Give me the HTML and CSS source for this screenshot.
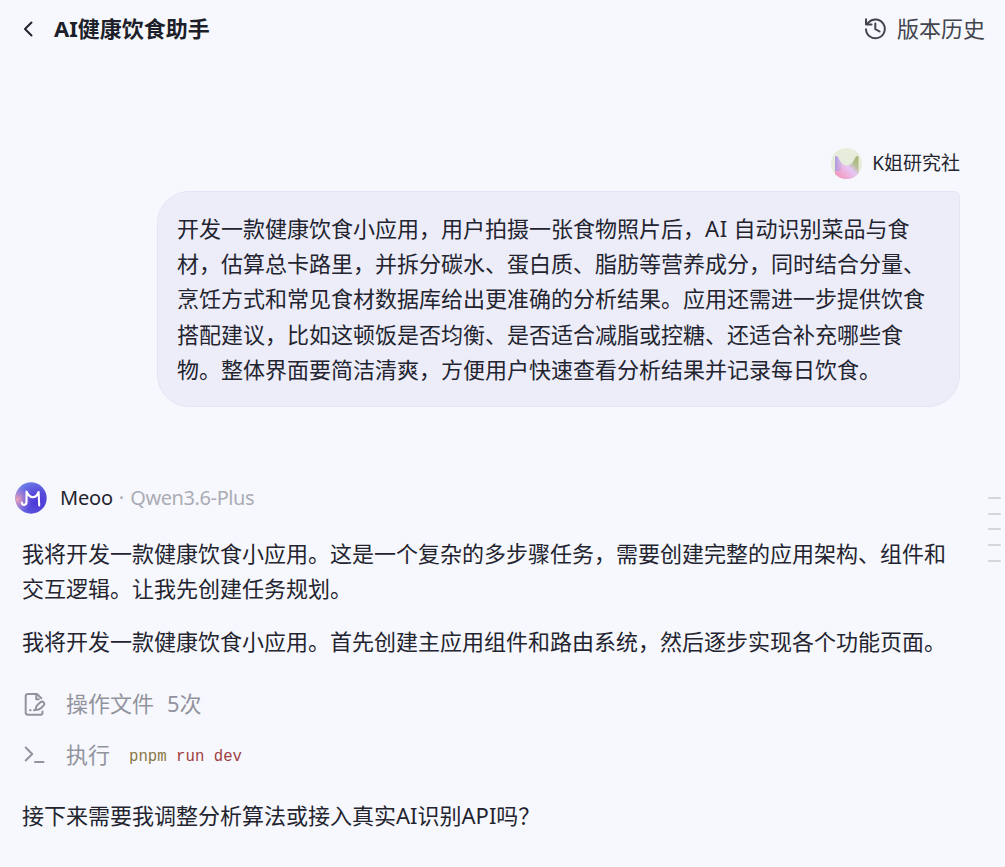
FILE: index.html
```html
<!DOCTYPE html>
<html lang="zh-CN">
<head>
  <meta charset="UTF-8" />
  <meta name="viewport" content="width=device-width, initial-scale=1.0" />
  <title>AI健康饮食助手</title>
  <link rel="stylesheet" href="styles.css">
</head>

<body>
  <!-- Header -->
  <header class="top-bar">
    <div class="header-left">
      <svg class="back-icon" width="12" height="18" viewBox="0 0 12 18"><path d="M9.5 2.5 3 9l6.5 6.5" /></svg>
      <h1>AI健康饮食助手</h1>
    </div>
    <div class="header-right">
      <svg class="history-icon" width="24" height="24" viewBox="0 0 24 24">
        <path d="M2 12.2a9.400 9.400 0 1 0 2.600-6.800L2.500 7" />
        <path d="M2 2.200v5.300h5.600M11.300 6.500v5.600l4.300 2.400" />
      </svg>
      <span>版本历史</span>
    </div>
  </header>

  <main class="chat">
    <!-- User message -->
    <div class="user-row">
      <svg class="avatar" width="31" height="31" viewBox="0 0 31 31">
        <defs>
          <linearGradient id="petal" x1="0" y1="1" x2="1" y2="0">
            <stop offset="0" stop-color="#f08bb0" />
            <stop offset=".25" stop-color="#efa6cf" />
            <stop offset=".55" stop-color="#e6c8f6" />
            <stop offset=".75" stop-color="#b4bf8f" />
            <stop offset="1" stop-color="#a3b573" />
          </linearGradient>
          <linearGradient id="petalSide" x1="0" y1="0" x2="1" y2="0">
            <stop offset="0" stop-color="#ad9cde" />
            <stop offset="1" stop-color="#ad9cde" stop-opacity="0" />
          </linearGradient>
          <clipPath id="userClip"><circle cx="15.5" cy="15.5" r="15.5" /></clipPath>
        </defs>
        <g clip-path="url(#userClip)">
          <rect width="31" height="31" fill="#e7ecdb" />
          <path d="M4 31V9q1-2 3.200.5c2.200 5 4.500 7.900 8.500 7.900s6.500-2.900 8.500-7.900q2.500-2.500 3.300-.5v22z" fill="url(#petal)" />
          <path d="M4 23V9q1-2 3.200.5c1.300 3 2.800 5.200 4.800 6.500v7z" fill="url(#petalSide)" />
        </g>
      </svg>
      <span>K姐研究社</span>
    </div>
    <div class="bubble">
      开发一款健康饮食小应用，用户拍摄一张食物照片后，<span class="latin">AI</span> 自动识别菜品与食<br>
      材，估算总卡路里，并拆分碳水、蛋白质、脂肪等营养成分，同时结合分量、<br>
      烹饪方式和常见食材数据库给出更准确的分析结果。应用还需进一步提供饮食<br>
      搭配建议，比如这顿饭是否均衡、是否适合减脂或控糖、还适合补充哪些食<br>
      物。整体界面要简洁清爽，方便用户快速查看分析结果并记录每日饮食。
    </div>

    <!-- Assistant reply -->
    <div class="bot-row">
      <svg class="avatar" width="32" height="32" viewBox="0 0 32 32">
        <defs>
          <radialGradient id="botBase" cx=".72" cy=".65" r=".75">
            <stop offset="0" stop-color="#4a35d6" />
            <stop offset=".5" stop-color="#5a4fdc" />
            <stop offset="1" stop-color="#6f80ea" />
          </radialGradient>
          <radialGradient id="botGlow" cx=".06" cy=".55" r=".45">
            <stop offset="0" stop-color="#f2a3b4" />
            <stop offset="1" stop-color="#b07ad8" stop-opacity="0" />
          </radialGradient>
        </defs>
        <circle cx="16" cy="16" r="15.700" fill="url(#botBase)" />
        <circle cx="16" cy="16" r="15.700" fill="url(#botGlow)" />
        <path class="bot-mark" d="M6.800 20.500c0 3.400 4.700 3.200 4.700-.5V9.500q2.500 5.700 6.300 5.700t5.800-5.200l.6 13.500" />
      </svg>
      <span class="bot-name">Meoo</span>
      <span class="dot">·</span>
      <span class="model">Qwen3.6-Plus</span>
    </div>
    <p>我将开发一款健康饮食小应用。这是一个复杂的多步骤任务，需要创建完整的应用架构、组件和<br>交互逻辑。让我先创建任务规划。</p>
    <p>我将开发一款健康饮食小应用。首先创建主应用组件和路由系统，然后逐步实现各个功能页面。</p>

    <div class="step">
      <svg width="24" height="24" viewBox="0 0 24 24">
        <path d="M20.500 19.500v1.300q0 2-2 2H6q-2.300 0-2.300-2.300V4.300Q3.700 2 6 2h9l4.300 4.200" />
        <path d="M14.300 2v5.300h2.500M8 18.300h.6M12 18.300h.5" />
        <path d="M13.500 18c-.2-2.600.6-4 2.400-5.600l2.600-2.200q1.800-1.200 3.100.2t.1 3l-2.600 2.600c-1.700 1.600-3.200 2.100-5.600 2z" />
      </svg>
      <span>操作文件</span>
      <span class="count">5次</span>
    </div>
    <div class="step">
      <svg width="24" height="24" viewBox="0 0 24 24">
        <path d="M3.700 4.500l6.500 6.500-6.500 6.500M13 19h8.500" />
      </svg>
      <span>执行</span>
      <code><span class="cmd">pnpm</span> run dev</code>
    </div>
    <p class="question">接下来需要我调整分析算法或接入真实AI识别API吗？</p>
  </main>

  <!-- Message navigator -->
  <div class="ticks">
    <i></i><i></i><i></i><i></i><i></i>
  </div>
</body>
</html>
```

FILE: styles.css
```css
body {
  margin: 0;
  height: 867px;
  overflow: hidden;
  position: relative;
  background-color: #f7f8fd;
  color: #23242f;
  font-family: 'Noto Sans', 'Noto Sans CJK SC', sans-serif;
  font-size: 22px;
  line-height: 35.2px;
}

svg {
  display: block;
  flex-shrink: 0;
  fill: none;
  stroke-width: 2;
  stroke-linecap: round;
  stroke-linejoin: round;
}

/* Header */
.top-bar {
  display: flex;
  align-items: center;
  justify-content: space-between;
  height: 58px;
  padding: 0 20px 0 22px;
}

.header-left,
.header-right {
  display: flex;
  align-items: center;
}

.header-left {
  gap: 20px;
}

.header-right {
  gap: 9px;
  color: #43444d;
}

.back-icon {
  stroke: #23242f;
}

.history-icon {
  stroke: #43444d;
}

h1 {
  margin: 0;
  font-size: 22px;
  font-weight: bold;
  color: #1d1f2a;
}

/* Conversation */
.chat {
  padding: 90px 45px 0 22px;
  white-space: nowrap;
}

.user-row {
  display: flex;
  align-items: center;
  justify-content: flex-end;
  gap: 10px;
  height: 31px;
  font-size: 19px;
}

.avatar {
  stroke: none;
}

.bubble {
  box-sizing: border-box;
  width: 803px;
  height: 216px;
  margin: 12px 0 0 auto;
  padding: 19px;
  border: 1px solid #e5e4f6;
  border-radius: 32px 6px 32px 32px;
  background-color: #ecedf9;
}

.latin {
  letter-spacing: 0.6px;
}

.bot-row {
  display: flex;
  align-items: center;
  height: 32px;
  margin: 75px 0 22px -7px;
  font-size: 20px;
}

.bot-name {
  margin-left: 13px;
  letter-spacing: -0.2px;
}

.dot {
  margin: 0 6px;
}

.dot,
.model {
  color: #abacb5;
}

.model {
  letter-spacing: -0.4px;
}

.bot-mark {
  stroke: #fff;
  stroke-width: 2.1;
}

p {
  margin: 0 0 18px;
}

.step {
  display: flex;
  align-items: center;
  height: 36px;
  margin-bottom: 15px;
  color: #92939d;
}

.step svg {
  margin-right: 20px;
  stroke: #92939d;
}

.count {
  margin-left: 13px;
}

p + .step {
  margin-top: 26px;
}

code {
  margin: 6px 0 0 19px;
  font-family: 'Liberation Mono', monospace;
  font-size: 15.7px;
  color: #a0403f;
}

.cmd {
  color: #8a7744;
}

.question {
  margin-top: 25px;
}

/* Sits over the right edge of the conversation */
.ticks {
  position: absolute;
  top: 497px;
  right: 4px;
  display: grid;
  gap: 13.7px;
}

.ticks i {
  width: 13px;
  height: 2px;
  border-radius: 1px;
  background-color: #d5d6dc;
}
```
